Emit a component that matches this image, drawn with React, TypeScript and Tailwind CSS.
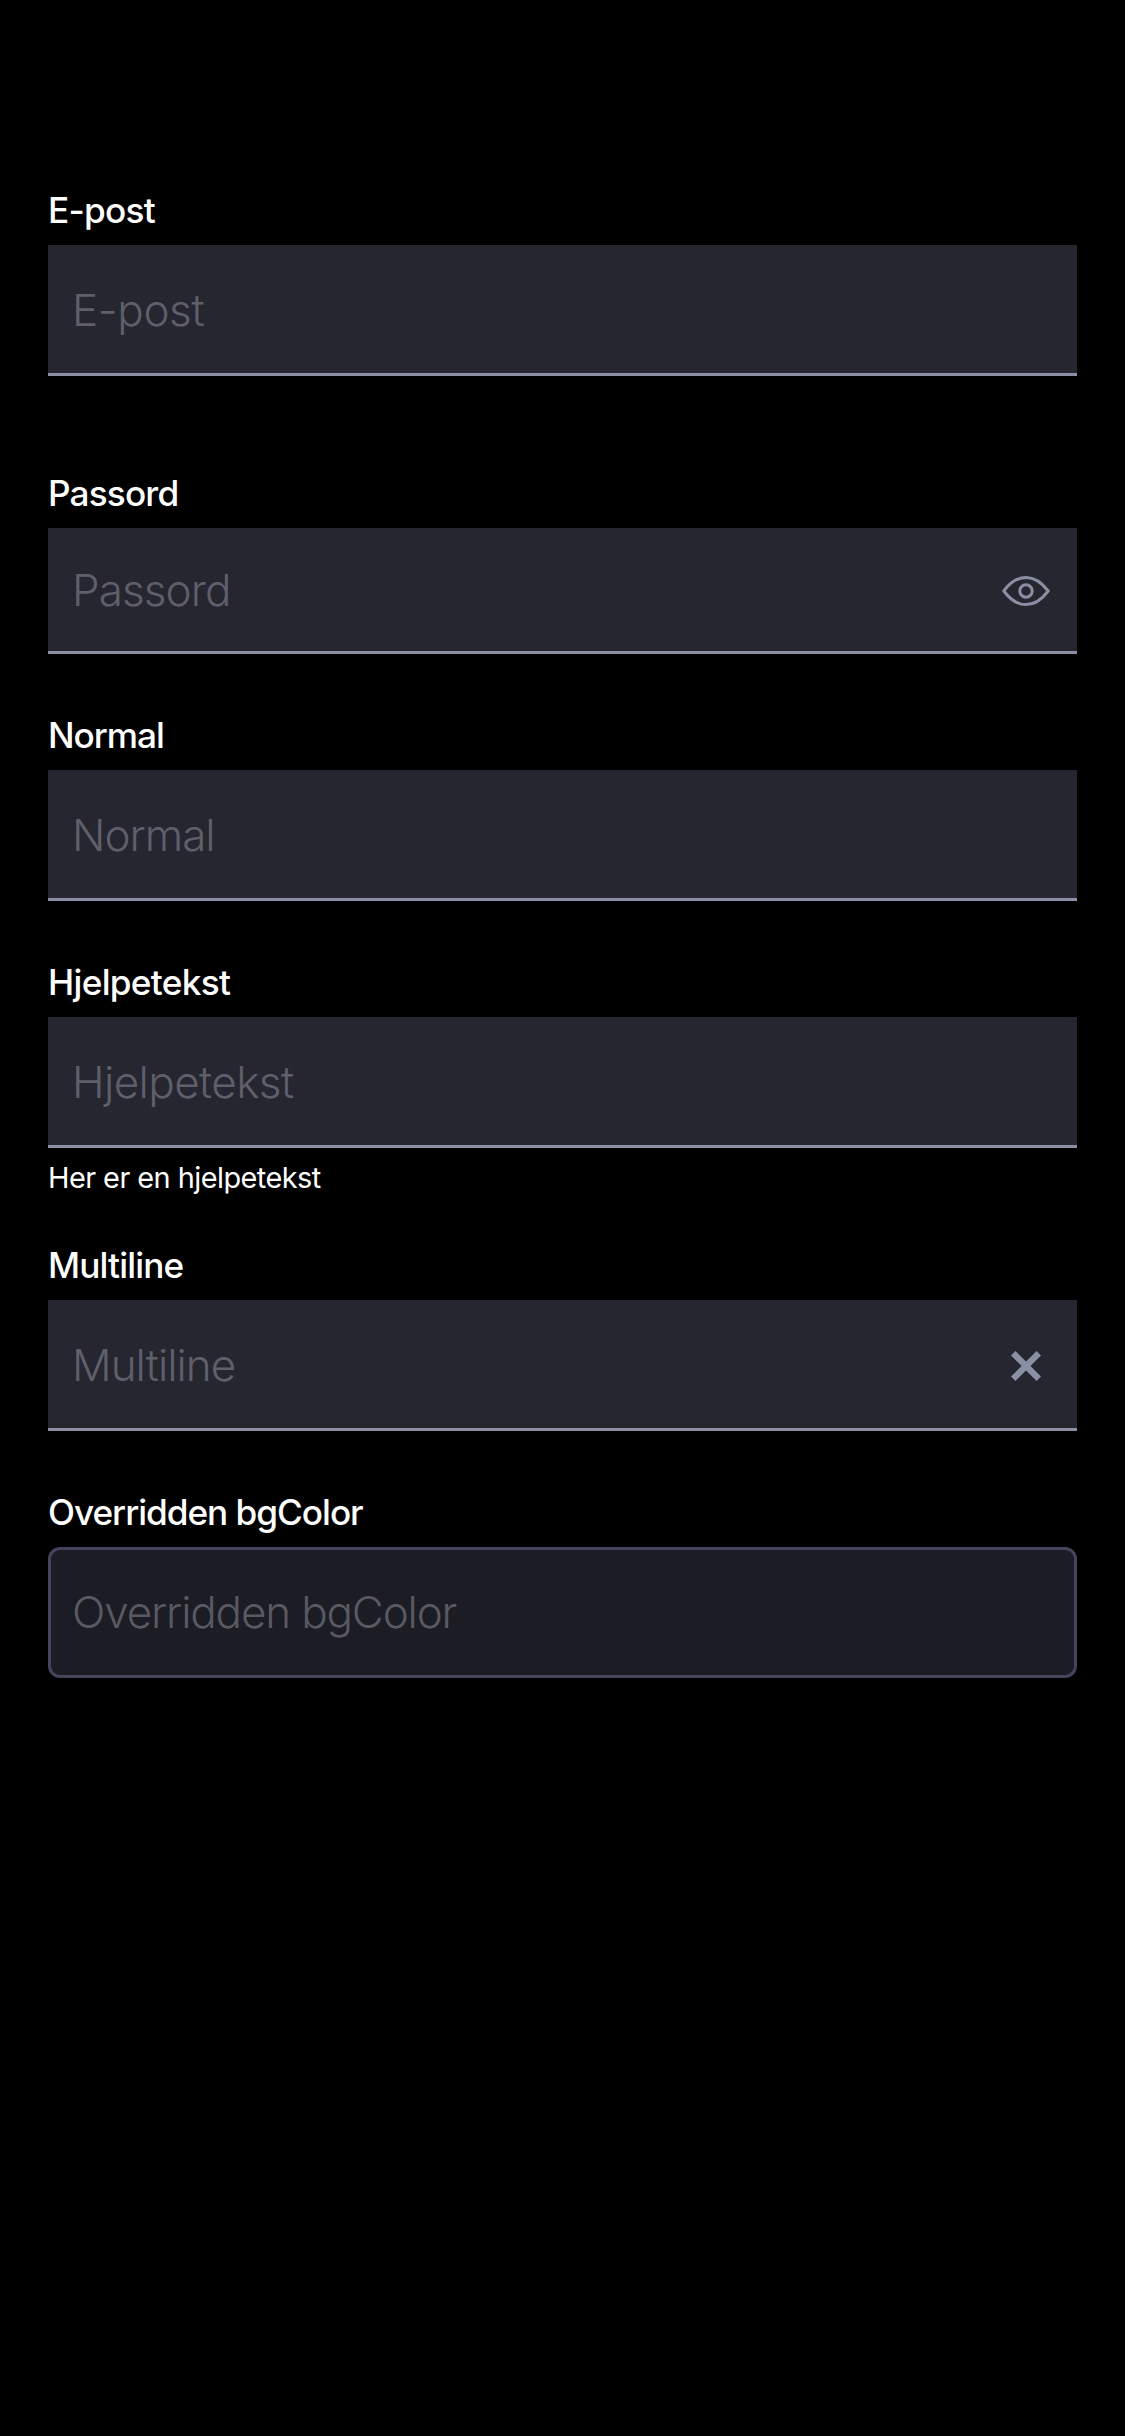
import type { ReactNode } from 'react';
import clsx from 'clsx';

type FieldProps = {
  label: string;
  className?: string;
  box?: string;
  labelSpacing: string;
  spacing: string;
  icon?: ReactNode;
  help?: string;
};

const filled = 'h-[131px] border-b-3 border-[#8a8fa3] bg-[#262631] pt-px pl-6 pr-[27px] text-[#5f5f6a]';
const filledShort = 'h-[126px] border-b-3 border-[#8a8fa3] bg-[#262631] pl-6 pr-[27px] text-[#5f5f6a]';
const outlined = 'h-[131px] rounded-xl border-3 border-[#44445c] bg-[#1c1c24] px-[21px] pb-px text-[#595961]';

function EyeIcon() {
  return (
    <svg className="mt-[3px]" width="48" height="32" viewBox="0 0 48 32" fill="none" stroke="#8a8fa3" strokeWidth="3" strokeLinejoin="round">
      <path d="M1.8 16C8.5 7 15.5 2.4 24 2.4S39.5 7 46.2 16C39.5 25 32.5 29.6 24 29.6S8.5 25 1.8 16Z" />
      <circle cx="24" cy="16" r="6.2" />
    </svg>
  );
}

function CloseIcon() {
  return (
    <svg className="mt-[3px]" width="48" height="32" viewBox="0 0 48 32" fill="none" stroke="#8a8fa3" strokeWidth="6.2">
      <path d="M11.2 3.2L36.8 28.8M36.8 3.2L11.2 28.8" />
    </svg>
  );
}

function Field({ label, className, box = filled, labelSpacing, spacing, icon, help }: FieldProps) {
  return (
    <div className={clsx('flex flex-col', className)}>
      <div className={clsx('mb-3 h-[46px] whitespace-nowrap text-[35.2px] font-medium leading-[46px] text-white', labelSpacing)}>
        {label}
      </div>
      <div className={clsx('flex items-center justify-between', box)}>
        <span className={clsx('whitespace-nowrap text-[44px] font-[330] leading-[60px]', spacing)}>{label}</span>
        {icon}
      </div>
      {help && (
        <div className="mt-2.5 h-10 whitespace-nowrap text-[28.9px] leading-10 tracking-[-0.55px] text-white">{help}</div>
      )}
    </div>
  );
}

export default function App() {
  return (
    <main className="flex h-[2436px] w-[1125px] flex-col bg-black px-12 pt-[187px] font-['Inter',sans-serif]">
      <Field label="E-post" labelSpacing="tracking-[-0.75px]" spacing="tracking-[-0.4px]" />
      <Field label="Passord" className="mt-[94px]" box={filledShort} labelSpacing="tracking-[-0.85px]" spacing="tracking-[-0.9px]" icon={<EyeIcon />} />
      <Field label="Normal" className="mt-[58px]" labelSpacing="tracking-[-1.05px]" spacing="tracking-[-1px]" />
      <Field label="Hjelpetekst" className="mt-[58px]" labelSpacing="tracking-[-0.7px]" spacing="tracking-[-0.59px]" help="Her er en hjelpetekst" />
      <Field label="Multiline" className="mt-11" labelSpacing="tracking-[-0.85px]" spacing="tracking-[-0.96px]" icon={<CloseIcon />} />
      <Field label="Overridden bgColor" className="mt-[58px]" box={outlined} labelSpacing="tracking-[-1.03px]" spacing="tracking-[-1.17px]" />
    </main>
  );
}
